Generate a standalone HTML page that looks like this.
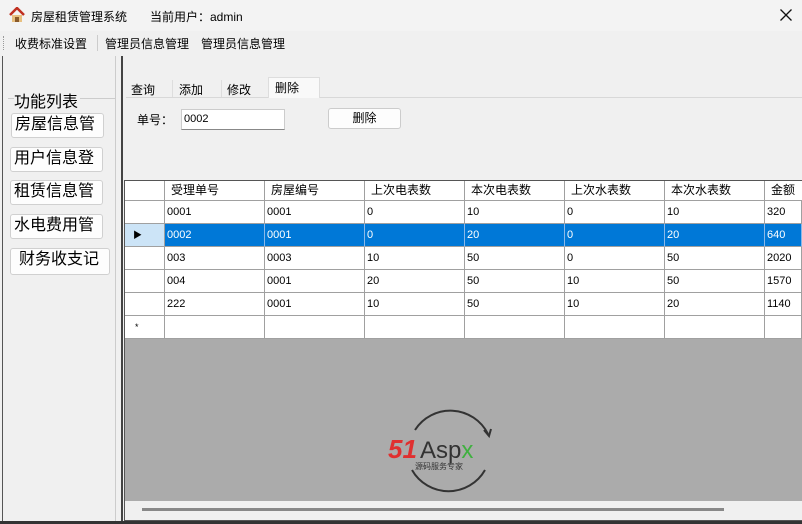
<!DOCTYPE html><html><head><meta charset="utf-8"><style>
*{margin:0;padding:0;box-sizing:border-box}
body{width:802px;height:524px;background:#f0f0f0;font-family:"Liberation Sans","Noto Sans CJK SC",sans-serif;font-size:12px;color:#000;position:relative;overflow:hidden}
.a{position:absolute}
.btn{position:absolute;background:#fdfdfd;border:1px solid #d0d0d0;border-radius:3px;font-size:16px;line-height:22px;padding-left:3px;white-space:nowrap;overflow:hidden}
.c{position:absolute;border-right:1px solid #a0a0a0;border-bottom:1px solid #a0a0a0;padding-left:2px;font-size:11px;line-height:22px;background:#fff;white-space:nowrap;overflow:hidden}
.h{background:#fff;line-height:19px;font-size:12px;padding-left:6px}
.sel{background:#0078d7;color:#fff;border-right-color:#8ab8e8}
</style></head><body>
<div class="a" style="left:0;top:0;width:802px;height:31px;background:#f3f3f3"></div>
<svg class="a" style="left:9px;top:7px" width="16" height="16"><path d="M1 8 L8 1 L15 8" stroke="#c03020" stroke-width="2.5" fill="none"/><rect x="3" y="8" width="10" height="7" fill="#e8c080"/><rect x="6" y="10" width="4" height="5" fill="#8a5a2a"/></svg>
<div class="a" style="left:31px;top:8px;font-size:12px">房屋租赁管理系统</div>
<div class="a" style="left:150px;top:8px;font-size:12px">当前用户：admin</div>
<svg class="a" style="left:780px;top:9px" width="12" height="12"><path d="M0.5 0.5 L11.5 11.5 M11.5 0.5 L0.5 11.5" stroke="#111" stroke-width="1.3"/></svg>
<div class="a" style="left:0;top:31px;width:802px;height:24px;background:#f0f0f0"></div>
<div class="a" style="left:3px;top:36px;height:14px;border-left:1px dotted #999"></div>
<div class="a" style="left:15px;top:35px">收费标准设置</div>
<div class="a" style="left:97px;top:35px;height:16px;border-left:1px solid #ccc"></div>
<div class="a" style="left:105px;top:35px">管理员信息管理</div>
<div class="a" style="left:201px;top:35px">管理员信息管理</div>
<div class="a" style="left:2px;top:56px;width:1px;height:466px;background:#555"></div>
<div class="a" style="left:0;top:521px;width:802px;height:3px;background:#333"></div>
<div class="a" style="left:8px;top:98px;width:107px;height:1px;background:#ccc"></div>
<div class="a" style="left:14px;top:88px;font-size:16px;background:#f0f0f0;padding-right:2px">功能列表</div>
<div class="btn" style="left:11px;top:113px;width:93px;height:25px">房屋信息管</div>
<div class="btn" style="left:10px;top:147px;width:93px;height:25px">用户信息登</div>
<div class="btn" style="left:10px;top:180px;width:93px;height:25px">租赁信息管</div>
<div class="btn" style="left:10px;top:214px;width:93px;height:25px">水电费用管</div>
<div class="btn" style="left:10px;top:248px;width:100px;height:27px;padding-left:8px">财务收支记</div>
<div class="a" style="left:115px;top:56px;width:1px;height:465px;background:#ccc"></div>
<div class="a" style="left:121px;top:56px;width:2px;height:465px;background:#444"></div>
<div class="a" style="left:126px;top:97px;width:676px;height:1px;background:#d8d8d8"></div>
<div class="a" style="left:131px;top:81px">查询</div>
<div class="a" style="left:172px;top:80px;height:17px;border-left:1px solid #ddd"></div>
<div class="a" style="left:179px;top:81px">添加</div>
<div class="a" style="left:221px;top:80px;height:17px;border-left:1px solid #ddd"></div>
<div class="a" style="left:227px;top:81px">修改</div>
<div class="a" style="left:268px;top:77px;width:52px;height:21px;background:#f9f9f9;border:1px solid #ddd;border-bottom:none"></div>
<div class="a" style="left:275px;top:79px">删除</div>
<div class="a" style="left:137px;top:111px">单号：</div>
<div class="a" style="left:181px;top:109px;width:104px;height:21px;background:#fff;border:1px solid #ccc;border-bottom-color:#888;padding:3px 2px;font-size:11px">0002</div>
<div class="a" style="left:328px;top:108px;width:73px;height:21px;background:#fdfdfd;border:1px solid #ccc;border-radius:3px;text-align:center;line-height:19px">删除</div>
<div class="a" style="left:124px;top:180px;width:678px;height:341px;border:1px solid #555;border-right:none;background:#ababab"></div>
<div class="c h" style="left:125px;top:181px;width:40px;height:20px"></div>
<div class="c h" style="left:165px;top:181px;width:100px;height:20px">受理单号</div>
<div class="c h" style="left:265px;top:181px;width:100px;height:20px">房屋编号</div>
<div class="c h" style="left:365px;top:181px;width:100px;height:20px">上次电表数</div>
<div class="c h" style="left:465px;top:181px;width:100px;height:20px">本次电表数</div>
<div class="c h" style="left:565px;top:181px;width:100px;height:20px">上次水表数</div>
<div class="c h" style="left:665px;top:181px;width:100px;height:20px">本次水表数</div>
<div class="c h" style="left:765px;top:181px;width:37px;height:20px;border-right:none">金额</div>
<div id="rows"></div>
<div class="a" style="left:125px;top:501px;width:677px;height:19px;background:#f0f0f0"></div>
<div class="a" style="left:142px;top:508px;width:582px;height:3px;background:#888"></div>
<svg class="a" style="left:385px;top:400px" width="130" height="95"><path d="M30 30 A42 42 0 0 1 103 34" stroke="#333" stroke-width="2" fill="none"/><path d="M99 30 l5 6 l2-7" stroke="#333" stroke-width="2" fill="none"/><path d="M27 70 A42 42 0 0 0 100 70" stroke="#333" stroke-width="2" fill="none"/><text x="3" y="58" font-family="Liberation Sans" font-weight="bold" font-style="italic" font-size="26" fill="#e03030">51</text><text x="35" y="58" font-family="Liberation Sans" font-size="24" fill="#333">Asp<tspan fill="#40b040">x</tspan></text><text x="30" y="69" font-family="Noto Sans CJK SC" font-size="8" fill="#333">源码服务专家</text></svg>
<script>
var d=[["0001","0001","0","10","0","10","320"],["0002","0001","0","20","0","20","640"],["003","0003","10","50","0","50","2020"],["004","0001","20","50","10","50","1570"],["222","0001","10","50","10","20","1140"],["","","","","","",""]];
var h="",xs=[165,265,365,465,565,665,765];
d.forEach(function(r,i){var y=201+i*23,s=i==1;
h+='<div class="c" style="left:125px;top:'+y+'px;width:40px;height:23px;'+(s?'background:#cce4f7':'')+'">'+(s?'<span style="font-size:9px;padding-left:6px">▶</span>':i==5?'<span style="font-size:9px;padding-left:8px">*</span>':'')+'</div>';
r.forEach(function(v,j){h+='<div class="c'+(s?' sel':'')+'" style="left:'+xs[j]+'px;top:'+y+'px;width:'+(j==6?37:100)+'px;height:23px">'+v+'</div>';});});
document.getElementById("rows").innerHTML=h;
</script>
</body></html>
